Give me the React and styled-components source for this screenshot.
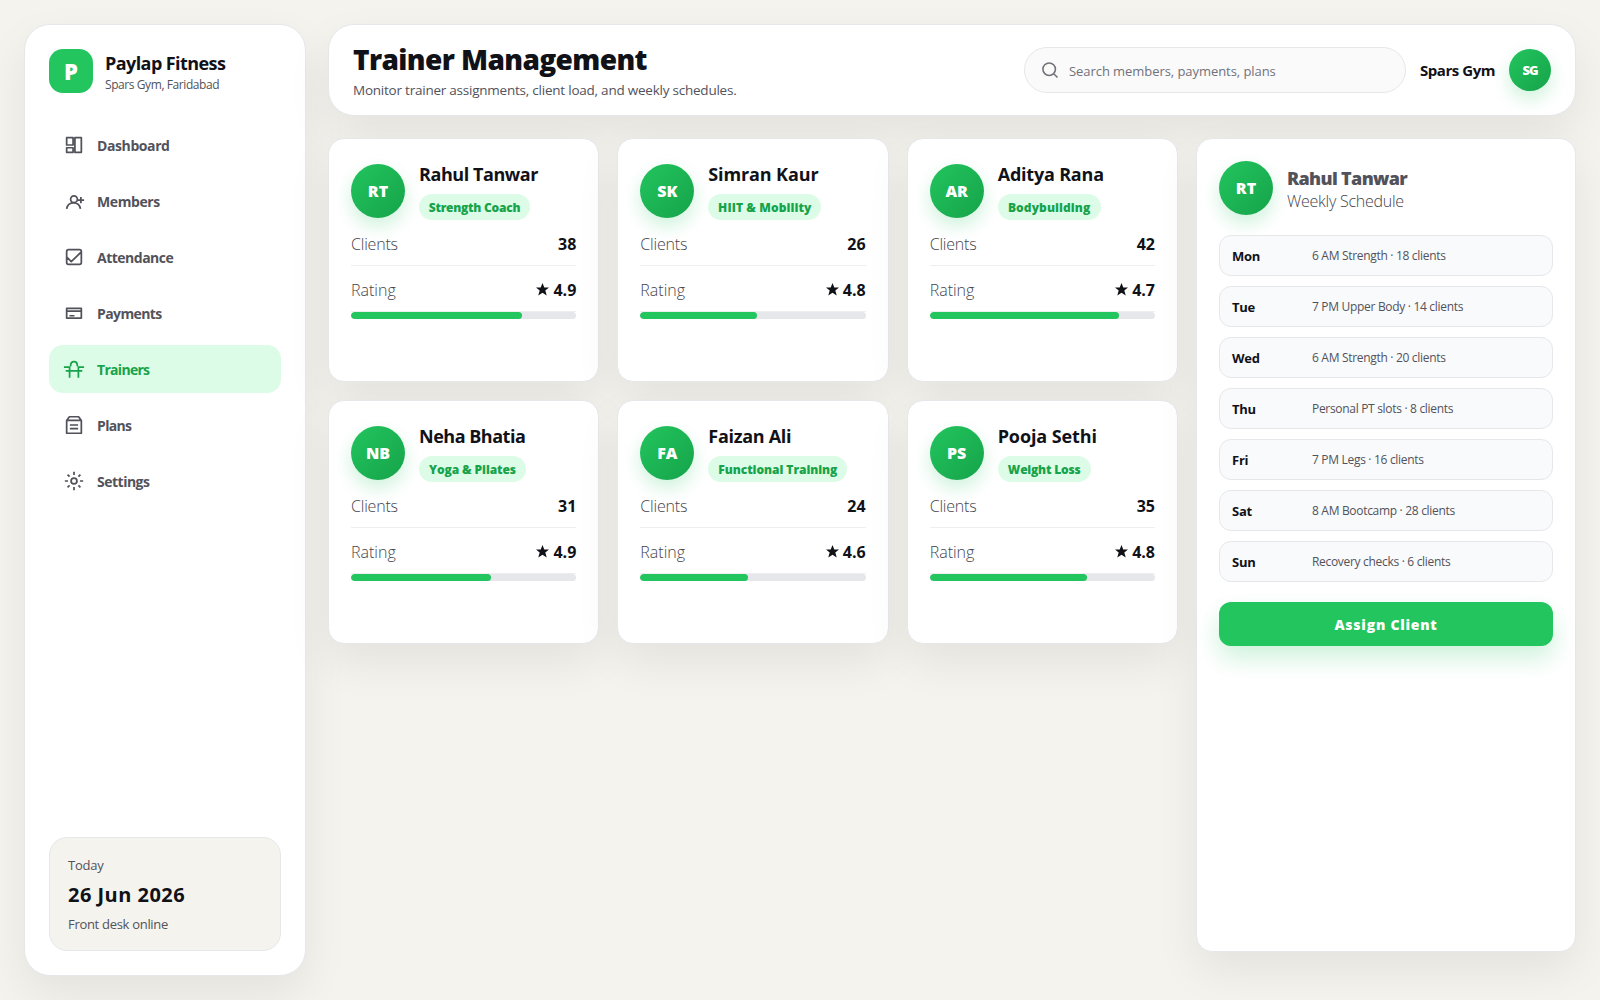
import styled, { createGlobalStyle } from "styled-components";

const GlobalStyle = createGlobalStyle`
  * {
    box-sizing: border-box;
  }
  body {
    margin: 0;
    background: #f4f3ed;
    color: #111118;
    font-family: "Open Sans", "Noto Sans", sans-serif;
    font-size: 16px;
  }
  h1, h2, p {
    margin: 0;
  }
`;

const Page = styled.div`
  display: grid;
  grid-template-columns: 282px 1fr;
  gap: 22px;
  height: 100vh;
  padding: 24px;
  overflow: hidden;
`;

const Surface = styled.div`
  background: #fff;
  border: 1px solid #e5e7eb;
  border-radius: ${(props) => props.$radius || 16}px;
  box-shadow: 0 18px 45px rgba(17, 17, 24, 0.07);
`;

const Sidebar = styled(Surface)`
  display: flex;
  flex-direction: column;
  padding: 24px;
`;

const Brand = styled.div`
  display: flex;
  align-items: center;
  gap: 12px;
  height: 44px;
  margin-bottom: 28px;
`;

const BrandText = styled.div`
  padding-top: 4px;
`;

const Logo = styled.div`
  display: grid;
  place-items: center;
  width: 44px;
  height: 44px;
  border-radius: 14px;
  background: #22c55e;
  color: #fff;
  font-size: 22px;
  font-weight: 800;
`;

const Text = styled.span`
  display: block;
  width: max-content;
  white-space: nowrap;
  color: ${(props) => props.$color || "#52525b"};
  font-size: ${(props) => props.$size || 13}px;
  font-weight: ${(props) => props.$weight || 400};
  line-height: ${(props) => props.$line || 20}px;
  letter-spacing: ${(props) => props.$spacing || 0}px;
`;

const Nav = styled.nav`
  display: flex;
  flex-direction: column;
  gap: 8px;
`;

const NavItem = styled.a`
  display: flex;
  align-items: center;
  gap: 12px;
  height: 48px;
  padding: 0 14px;
  border-radius: 14px;
  background: ${(props) => (props.$active ? "#dcfce7" : "transparent")};
  color: ${(props) => (props.$active ? "#16a34a" : "#52525b")};
  font-size: 14px;
  font-weight: 700;
  letter-spacing: ${(props) => props.$spacing}px;
`;

const Icon = styled.svg`
  flex: none;
  width: ${(props) => props.$size || 22}px;
  height: ${(props) => props.$size || 22}px;
  fill: none;
  stroke: currentColor;
  stroke-width: 1.9;
  stroke-linejoin: round;
  stroke-linecap: butt;
`;

const Today = styled.div`
  height: 114px;
  margin-top: auto;
  padding: 17px 18px;
  border: 1px solid #e5e7eb;
  border-radius: 18px;
  background: #f4f3ed;
`;

const Main = styled.main`
  display: flex;
  flex-direction: column;
  gap: 22px;
  min-width: 0;
`;

const Header = styled(Surface)`
  display: flex;
  align-items: center;
  gap: 14px;
  height: 92px;
  padding: 0 24px;
`;

const Heading = styled.div`
  margin-right: auto;
  padding-top: 7px;
`;

const Search = styled.label`
  display: flex;
  align-items: center;
  gap: 9px;
  width: 382px;
  height: 46px;
  padding: 2px 16px 0 15px;
  border: 1px solid #e7e7ea;
  border-radius: 23px;
  background: #fafafa;
  color: #71717a;

  svg {
    margin-top: -3px;
  }
`;

const UserName = styled.div`
  width: 75px;
`;

const Avatar = styled.div`
  flex: none;
  display: grid;
  place-items: center;
  width: ${(props) => props.$size || 54}px;
  height: ${(props) => props.$size || 54}px;
  border-radius: 50%;
  background: linear-gradient(135deg, #22c55e, #16a34a);
  box-shadow: 0 8px 18px rgba(34, 197, 94, 0.22);
  color: #fff;
  font-size: ${(props) => (props.$size ? 13 : 16)}px;
  font-weight: 800;
  letter-spacing: ${(props) => (props.$size ? -1 : 0)}px;
`;

const Content = styled.div`
  display: grid;
  grid-template-columns: 1fr 380px;
  gap: 18px;
  height: 814px;
`;

const TrainerGrid = styled.section`
  display: grid;
  grid-template-columns: repeat(3, 1fr);
  grid-auto-rows: 244px;
  gap: 18px;
`;

const TrainerCard = styled(Surface)`
  padding: 22px;
`;

const CardHead = styled.div`
  display: flex;
  align-items: center;
  gap: 14px;
  height: 60px;
`;

const CardTitle = styled.div`
  padding-bottom: 2px;
`;

const Pill = styled.div`
  display: flex;
  align-items: center;
  justify-content: center;
  width: ${(props) => props.$width}px;
  height: 26px;
  margin-top: 7px;
  padding-top: 2px;
  border-radius: 13px;
  background: #dcfce7;
`;

const StatRow = styled.div`
  display: flex;
  align-items: center;
  justify-content: space-between;
  height: ${(props) => props.$height}px;
  padding-top: ${(props) => props.$height - 44}px;
  border-bottom: 1px solid #eeeef0;
`;

const Score = styled.span`
  display: flex;
  align-items: center;
  gap: 4px;
`;

const Star = styled.svg`
  width: 13px;
  height: 13px;
  fill: #111118;
`;

const Track = styled.div`
  height: 7px;
  border-radius: 4px;
  overflow: hidden;
  background: #e5e7eb;
`;

const Fill = styled.div`
  height: 100%;
  border-radius: 4px;
  background: #22c55e;
`;

const Schedule = styled(Surface)`
  display: flex;
  flex-direction: column;
  padding: 22px;
`;

const ScheduleHead = styled.div`
  display: flex;
  align-items: center;
  gap: 14px;
  margin-bottom: 20px;
`;

const ScheduleTitle = styled.div`
  padding-top: 2px;
`;

const Slots = styled.div`
  display: flex;
  flex-direction: column;
  gap: 10px;
`;

const Slot = styled.div`
  display: grid;
  grid-template-columns: 80px 1fr;
  align-items: center;
  height: 41px;
  padding: 0 12px;
  border: 1px solid #e5e7eb;
  border-radius: 12px;
  background: #f9fafb;
`;

const AssignButton = styled.button`
  height: 44px;
  margin-top: 20px;
  border: 0;
  border-radius: 12px;
  background: #22c55e;
  box-shadow: 0 12px 24px rgba(34, 197, 94, 0.22);
  color: #fff;
  font-family: inherit;
  font-size: 14px;
  font-weight: 800;
  letter-spacing: 0.75px;
`;

const navItems = [
  { label: "Dashboard", spacing: -0.4, path: "M4 4h7v8H4z M13 4h7v16h-7z M4 15h7v5H4z" },
  {
    label: "Members",
    spacing: -0.4,
    path: "M15.7 10a3.7 3.7 0 1 1-7.4 0a3.7 3.7 0 0 1 7.4 0z M4 20.5c.7-4.5 3.3-6.5 7.500-6.500s6.800 2 7.500 6.500 M19.500 7.500v7 M16 11h7",
  },
  {
    label: "Attendance",
    spacing: -0.5,
    path: "M6 4h12a2 2 0 0 1 2 2v12a2 2 0 0 1-2 2H6a2 2 0 0 1-2-2V6a2 2 0 0 1 2-2z M4.5 12.5L9 17L20 6.5",
  },
  { label: "Payments", spacing: -0.6, path: "M4 7h16v10.5H4z M4 10h16 M7 15h5.5" },
  {
    label: "Trainers",
    spacing: -0.7,
    path: "M1 10h7 M16 10h7 M7.2 9v12.5 M16.8 9v12.5 M3 14h18 M8.3 9c0-3 1.2-5 3.7-5s3.7 2 3.7 5",
  },
  { label: "Plans", spacing: -0.65, path: "M7 3h10l3 4v14H4V7z M4 7h16 M7.5 12h9 M7.5 16h9" },
  {
    label: "Settings",
    spacing: -0.5,
    path: "M15.2 12a3.2 3.2 0 1 1-6.4 0a3.2 3.2 0 0 1 6.4 0z M12 2v3.5 M12 18.5v3.5 M2 12h3.5 M18.5 12h3.5 M5 5l2.2 2.2 M16.8 16.8L19 19 M5 19l2.2-2.2 M16.8 7.2L19 5",
  },
];

const trainers = [
  { name: "Rahul Tanwar", initials: "RT", role: "Strength Coach", clients: 38, rating: "4.9", pill: 111, nameSpacing: -0.43, roleSpacing: -0.25 },
  { name: "Simran Kaur", initials: "SK", role: "HIIT & Mobility", clients: 26, rating: "4.8", pill: 113, nameSpacing: -0.12, roleSpacing: 0.1 },
  { name: "Aditya Rana", initials: "AR", role: "Bodybuilding", clients: 42, rating: "4.7", pill: 103, nameSpacing: -0.2, roleSpacing: 0.1 },
  { name: "Neha Bhatia", initials: "NB", role: "Yoga & Pilates", clients: 31, rating: "4.9", pill: 107, nameSpacing: -0.48, roleSpacing: -0.1 },
  { name: "Faizan Ali", initials: "FA", role: "Functional Training", clients: 24, rating: "4.6", pill: 139, nameSpacing: -0.3, roleSpacing: -0.05 },
  { name: "Pooja Sethi", initials: "PS", role: "Weight Loss", clients: 35, rating: "4.8", pill: 93, nameSpacing: -0.1, roleSpacing: -0.2 },
];

const slots = [
  ["Mon", "6 AM Strength · 18 clients"],
  ["Tue", "7 PM Upper Body · 14 clients"],
  ["Wed", "6 AM Strength · 20 clients"],
  ["Thu", "Personal PT slots · 8 clients"],
  ["Fri", "7 PM Legs · 16 clients"],
  ["Sat", "8 AM Bootcamp · 28 clients"],
  ["Sun", "Recovery checks · 6 clients"],
];

const ink = "#111118";
const soft = "#45454d";

const Trainer = ({ trainer }) => {
  return (
    <TrainerCard>
      <CardHead>
        <Avatar>{trainer.initials}</Avatar>
        <CardTitle>
          <Text as="h2" $size={18} $weight={700} $line={26} $color={ink} $spacing={trainer.nameSpacing}>
            {trainer.name}
          </Text>
          <Pill $width={trainer.pill}>
            <Text $size={12} $weight={800} $color="#16a34a" $spacing={trainer.roleSpacing}>
              {trainer.role}
            </Text>
          </Pill>
        </CardTitle>
      </CardHead>
      <StatRow $height={45}>
        <Text $size={16} $weight={300} $color={soft} $spacing={-0.2}>
          Clients
        </Text>
        <Text $size={16} $weight={700} $color={ink}>
          {trainer.clients}
        </Text>
      </StatRow>
      <StatRow $height={46}>
        <Text $size={16} $weight={300} $color={soft}>
          Rating
        </Text>
        <Score>
          <Star viewBox="0 0 24 24">
            <path d="M12 0l3.3 8.3H24l-6.800 5.700L19.800 23 12 18 4.200 23l2.600-9L0 8.300h8.700z" />
          </Star>
          <Text $size={16} $weight={700} $color={ink}>
            {trainer.rating}
          </Text>
        </Score>
      </StatRow>
      <Track>
        <Fill style={{ width: `${trainer.clients * 2}%` }} />
      </Track>
    </TrainerCard>
  );
};

const App = () => {
  return (
    <>
      <GlobalStyle />
      <Page>
        <Sidebar as="aside" $radius={26}>
          <Brand>
            <Logo>P</Logo>
            <BrandText>
              <Text $size={18} $weight={700} $line={23} $color={ink} $spacing={-0.58}>
                Paylap Fitness
              </Text>
              <Text $size={12} $line={19} $spacing={-0.42}>
                Spars Gym, Faridabad
              </Text>
            </BrandText>
          </Brand>
          <Nav>
            {navItems.map((item) => (
              <NavItem key={item.label} $active={item.label === "Trainers"} $spacing={item.spacing}>
                <Icon viewBox="0 0 24 24">
                  <path d={item.path} />
                </Icon>
                {item.label}
              </NavItem>
            ))}
          </Nav>
          <Today>
            <Text $size={13} $spacing={-0.2}>
              Today
            </Text>
            <Text $size={20} $weight={700} $line={39} $color={ink} $spacing={0.48}>
              26 Jun 2026
            </Text>
            <Text $size={13} $spacing={-0.3}>
              Front desk online
            </Text>
          </Today>
        </Sidebar>
        <Main>
          <Header as="header" $radius={26}>
            <Heading>
              <Text as="h1" $size={28} $weight={800} $line={34} $color={ink} $spacing={-0.6}>
                Trainer Management
              </Text>
              <Text as="p" $size={13.5} $line={29} $spacing={-0.23}>
                Monitor trainer assignments, client load, and weekly schedules.
              </Text>
            </Heading>
            <Search>
              <Icon viewBox="0 0 24 24" $size={20}>
                <path d="M18.5 11a7.5 7.5 0 1 1-15 0a7.5 7.5 0 0 1 15 0z M16.5 16.5L21 21" />
              </Icon>
              <Text $color="#71717a" $spacing={-0.06}>
                Search members, payments, plans
              </Text>
            </Search>
            <UserName>
              <Text $size={15} $weight={700} $color={ink} $spacing={-0.45}>
                Spars Gym
              </Text>
            </UserName>
            <Avatar $size={42}>SG</Avatar>
          </Header>
          <Content>
            <TrainerGrid>
              {trainers.map((trainer) => (
                <Trainer key={trainer.name} trainer={trainer} />
              ))}
            </TrainerGrid>
            <Schedule as="aside">
              <ScheduleHead>
                <Avatar>RT</Avatar>
                <ScheduleTitle>
                  <Text $size={18} $weight={800} $line={24} $spacing={-0.65}>
                    Rahul Tanwar
                  </Text>
                  <Text $size={16} $weight={300} $line={22} $color={soft} $spacing={-0.25}>
                    Weekly Schedule
                  </Text>
                </ScheduleTitle>
              </ScheduleHead>
              <Slots>
                {slots.map(([day, detail]) => (
                  <Slot key={day}>
                    <Text $size={13} $weight={700} $color={ink} $spacing={-0.25}>
                      {day}
                    </Text>
                    <Text $size={12} $spacing={-0.31}>
                      {detail}
                    </Text>
                  </Slot>
                ))}
              </Slots>
              <AssignButton>Assign Client</AssignButton>
            </Schedule>
          </Content>
        </Main>
      </Page>
    </>
  );
};

export default App;
